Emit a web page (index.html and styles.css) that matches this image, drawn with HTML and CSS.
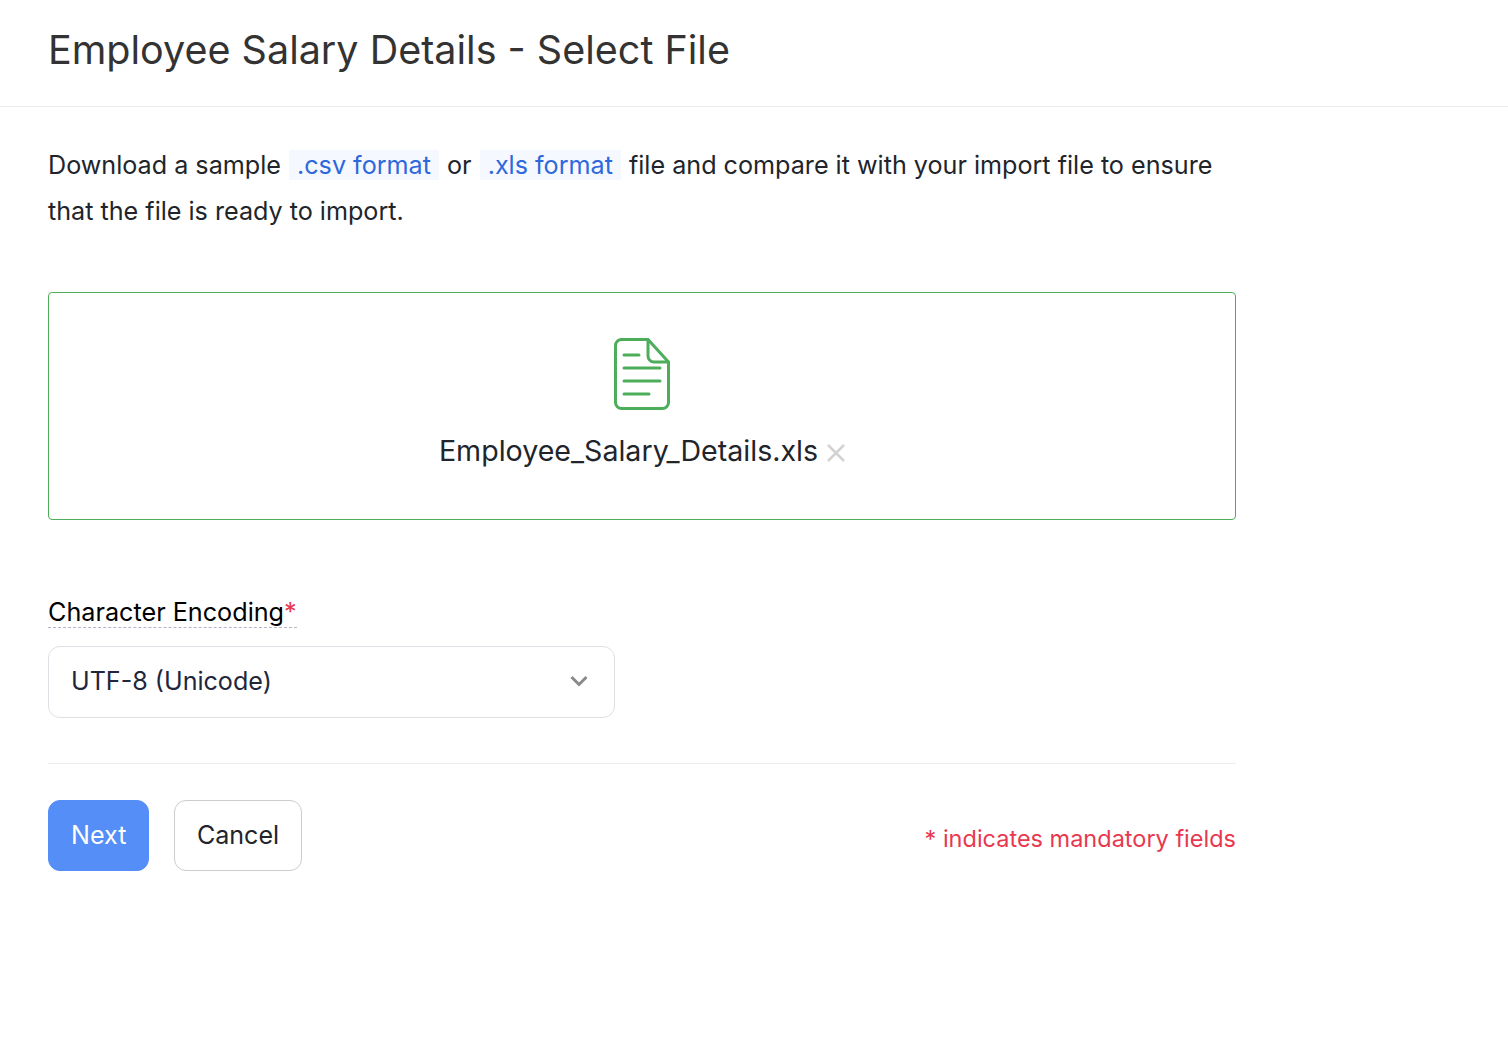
FILE: index.html
```html
<!DOCTYPE html>
<html lang="en">
<head>
    <meta charset="UTF-8">
    <meta name="viewport" content="width=device-width, initial-scale=1.0">
    <title>Employee Salary Details - Select File</title>
    <link rel="stylesheet" href="styles.css">
</head>
<body>

    <div class="header">
        <h1>Employee Salary Details - Select File</h1>
    </div>

    <div class="content">
        <p class="intro">Download a sample <a class="sample-link">.csv format</a> or <a class="sample-link">.xls format</a> file and compare it with your import file to ensure that the file is ready to import.</p>

        <div class="dropzone">
            <svg class="file-icon" width="58" height="74" viewBox="0 0 58 74" fill="none">
                <path d="M9 2.500H35L55.500 25V65.500a6 6 0 0 1-6 6H8.500a6 6 0 0 1-6-6V8.500a6 6 0 0 1 6-6Z" />
                <path d="M35 2.500V19a6 6 0 0 0 6 6H55.500" />
                <path d="M11 18H26M11 31H47M11 44H47M11 57H36" />
            </svg>
            <div class="file-row">
                <span class="file-name">Employee_Salary_Details.xls</span>
                <svg class="remove-icon" width="20" height="20" viewBox="0 0 20 20" fill="none">
                    <path d="M2 2L18 18M18 2L2 18" />
                </svg>
            </div>
        </div>

        <div class="field">
            <label class="field-label">Character Encoding<span class="required">*</span></label>
            <div class="select">
                <span>UTF-8 (Unicode)</span>
                <svg width="18" height="12" viewBox="0 0 18 12" fill="none">
                    <path d="M1.500 2L9 9.500L16.500 2" />
                </svg>
            </div>
        </div>

        <div class="footer">
            <div class="buttons">
                <button class="btn btn-primary">Next</button>
                <button class="btn btn-cancel">Cancel</button>
            </div>
            <div class="mandatory">* indicates mandatory fields</div>
        </div>
    </div>

</body>
</html>
```

FILE: styles.css
```css
* {
    margin: 0;
    padding: 0;
    box-sizing: border-box;
    font-family: Inter, "Noto Sans", sans-serif;
}

body {
    background-color: #fff;
    color: #21263c;
}

.header {
    height: 107px;
    padding: 0 48px 7px;
    display: flex;
    align-items: center;
    border-bottom: 1px solid #ebebeb;
}

h1 {
    font-size: 39.500px;
    font-weight: 400;
    color: #333;
}

.content {
    width: 1236px;
    padding: 35px 0 0 48px;
}

.intro {
    font-size: 25.150px;
    line-height: 46px;
    color: #21252b;
}

.sample-link {
    display: inline-block;
    line-height: 30px;
    padding: 0 8px;
    margin: 0 1px;
    background-color: #f5f8fe;
    color: #2e68dc;
}

.dropzone {
    height: 228px;
    margin-top: 58px;
    border: 1px solid #4cae5b;
    border-radius: 4px;
    display: flex;
    flex-direction: column;
    align-items: center;
    padding-top: 44px;
}

.file-icon path {
    stroke: #4cae5b;
    stroke-width: 3;
    stroke-linecap: round;
    stroke-linejoin: round;
}

.file-row {
    display: flex;
    align-items: center;
    gap: 8px;
    margin-top: 22px;
    padding-left: 1px;
}

.file-name {
    font-size: 28.600px;
    color: #21252b;
}

.remove-icon {
    margin-top: 4px;
}

.remove-icon path {
    stroke: #d2d2d2;
    stroke-width: 2.500;
}

.field {
    margin-top: 76px;
}

.field-label {
    display: inline-block;
    font-size: 25.200px;
    line-height: 29px;
    padding-top: 2px;
    color: #000;
    border-bottom: 1px dashed #b5b3c4;
}

.required {
    color: #e8384f;
}

.select {
    width: 567px;
    height: 72px;
    margin-top: 18px;
    padding: 0 26px 2px 22px;
    border: 1px solid #dfe0e6;
    border-radius: 12px;
    display: flex;
    align-items: center;
    justify-content: space-between;
    font-size: 25.100px;
    color: #21263c;
}

.select path {
    stroke: #8a8a8a;
    stroke-width: 3;
}

.footer {
    margin-top: 45px;
    padding-top: 36px;
    border-top: 1px solid #ebebeb;
    display: flex;
    justify-content: space-between;
    align-items: center;
}

.buttons {
    display: flex;
    gap: 25px;
}

.btn {
    height: 71px;
    padding: 0 22px 2px;
    font-size: 25.100px;
    color: #21252b;
    background-color: #fff;
    border: 1px solid #ccc;
    border-radius: 12px;
}

.btn-primary {
    background-color: #548ef6;
    border-color: #548ef6;
    color: #fff;
}

.btn-cancel {
    padding: 0 21.500px 2px;
}

.mandatory {
    font-size: 23.500px;
    color: #e8384f;
    padding-top: 6px;
}
```
